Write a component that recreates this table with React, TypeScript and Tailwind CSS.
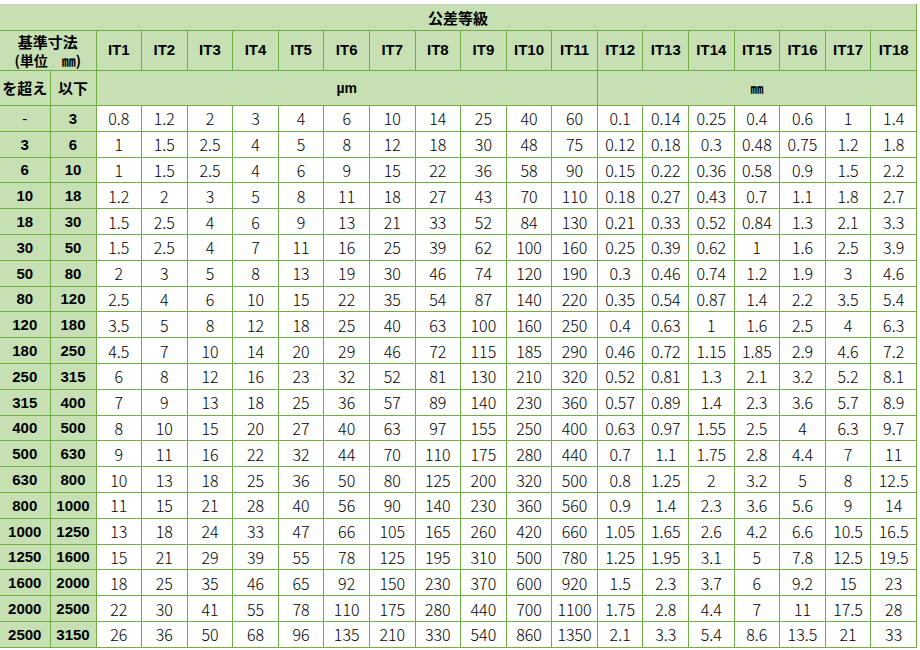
import React from "react";

const rows: [string, string, string[]][] = [
  ["-", "3", ["0.8", "1.2", "2", "3", "4", "6", "10", "14", "25", "40", "60", "0.1", "0.14", "0.25", "0.4", "0.6", "1", "1.4"]],
  ["3", "6", ["1", "1.5", "2.5", "4", "5", "8", "12", "18", "30", "48", "75", "0.12", "0.18", "0.3", "0.48", "0.75", "1.2", "1.8"]],
  ["6", "10", ["1", "1.5", "2.5", "4", "6", "9", "15", "22", "36", "58", "90", "0.15", "0.22", "0.36", "0.58", "0.9", "1.5", "2.2"]],
  ["10", "18", ["1.2", "2", "3", "5", "8", "11", "18", "27", "43", "70", "110", "0.18", "0.27", "0.43", "0.7", "1.1", "1.8", "2.7"]],
  ["18", "30", ["1.5", "2.5", "4", "6", "9", "13", "21", "33", "52", "84", "130", "0.21", "0.33", "0.52", "0.84", "1.3", "2.1", "3.3"]],
  ["30", "50", ["1.5", "2.5", "4", "7", "11", "16", "25", "39", "62", "100", "160", "0.25", "0.39", "0.62", "1", "1.6", "2.5", "3.9"]],
  ["50", "80", ["2", "3", "5", "8", "13", "19", "30", "46", "74", "120", "190", "0.3", "0.46", "0.74", "1.2", "1.9", "3", "4.6"]],
  ["80", "120", ["2.5", "4", "6", "10", "15", "22", "35", "54", "87", "140", "220", "0.35", "0.54", "0.87", "1.4", "2.2", "3.5", "5.4"]],
  ["120", "180", ["3.5", "5", "8", "12", "18", "25", "40", "63", "100", "160", "250", "0.4", "0.63", "1", "1.6", "2.5", "4", "6.3"]],
  ["180", "250", ["4.5", "7", "10", "14", "20", "29", "46", "72", "115", "185", "290", "0.46", "0.72", "1.15", "1.85", "2.9", "4.6", "7.2"]],
  ["250", "315", ["6", "8", "12", "16", "23", "32", "52", "81", "130", "210", "320", "0.52", "0.81", "1.3", "2.1", "3.2", "5.2", "8.1"]],
  ["315", "400", ["7", "9", "13", "18", "25", "36", "57", "89", "140", "230", "360", "0.57", "0.89", "1.4", "2.3", "3.6", "5.7", "8.9"]],
  ["400", "500", ["8", "10", "15", "20", "27", "40", "63", "97", "155", "250", "400", "0.63", "0.97", "1.55", "2.5", "4", "6.3", "9.7"]],
  ["500", "630", ["9", "11", "16", "22", "32", "44", "70", "110", "175", "280", "440", "0.7", "1.1", "1.75", "2.8", "4.4", "7", "11"]],
  ["630", "800", ["10", "13", "18", "25", "36", "50", "80", "125", "200", "320", "500", "0.8", "1.25", "2", "3.2", "5", "8", "12.5"]],
  ["800", "1000", ["11", "15", "21", "28", "40", "56", "90", "140", "230", "360", "560", "0.9", "1.4", "2.3", "3.6", "5.6", "9", "14"]],
  ["1000", "1250", ["13", "18", "24", "33", "47", "66", "105", "165", "260", "420", "660", "1.05", "1.65", "2.6", "4.2", "6.6", "10.5", "16.5"]],
  ["1250", "1600", ["15", "21", "29", "39", "55", "78", "125", "195", "310", "500", "780", "1.25", "1.95", "3.1", "5", "7.8", "12.5", "19.5"]],
  ["1600", "2000", ["18", "25", "35", "46", "65", "92", "150", "230", "370", "600", "920", "1.5", "2.3", "3.7", "6", "9.2", "15", "23"]],
  ["2000", "2500", ["22", "30", "41", "55", "78", "110", "175", "280", "440", "700", "1100", "1.75", "2.8", "4.4", "7", "11", "17.5", "28"]],
  ["2500", "3150", ["26", "36", "50", "68", "96", "135", "210", "330", "540", "860", "1350", "2.1", "3.3", "5.4", "8.6", "13.5", "21", "33"]],
];

const grades = Array.from({ length: 18 }, (_, i) => `IT${i + 1}`);

const jp = "font-['Noto_Sans_CJK_JP',sans-serif]";
const arial = "font-['Liberation_Sans','Noto_Sans_CJK_JP',sans-serif]";

export default function App() {
  return (
    <div className="w-[920px] h-[650px] bg-white pt-[4px] overflow-hidden">
      <table className="table-fixed border-collapse w-[917px] text-black">
        <colgroup>
          <col className="w-[50px]" />
          <col className="w-[46px]" />
          {grades.map((g) => (
            <col key={g} />
          ))}
        </colgroup>
        <thead>
          {/* grade title */}
          <tr className="h-[26px] bg-[#c6e0b4]">
            <th
              colSpan={20}
              className={`border border-[#70ad47] border-t-[#c8c8c8] border-l-0 text-[15px] leading-none font-bold ${jp}`}
            >
              公差等級
            </th>
          </tr>
          <tr className="h-[40px] bg-[#c6e0b4]">
            <th colSpan={2} className={`border border-[#70ad47] border-l-0 p-0 font-bold ${jp}`}>
              <div className="flex flex-col items-center">
                <span className="text-[15px] leading-[18px]">基準寸法</span>
                <span className="text-[14px] leading-[18px] whitespace-nowrap">(単位　㎜)</span>
              </div>
            </th>
            {grades.map((g) => (
              <th key={g} className={`border border-[#70ad47] p-0 text-[15px] font-bold ${arial}`}>
                {g}
              </th>
            ))}
          </tr>
          <tr className="h-[35px] bg-[#c6e0b4]">
            <th className={`border border-[#70ad47] border-l-0 p-0 text-[15px] font-bold whitespace-nowrap ${jp}`}>
              を超え
            </th>
            <th className={`border border-[#70ad47] p-0 text-[15px] font-bold ${jp}`}>以下</th>
            <th colSpan={11} className={`border border-[#70ad47] text-[14px] font-bold ${arial}`}>
              µm
            </th>
            <th colSpan={7} className={`border border-[#70ad47] text-[13px] font-bold ${jp}`}>
              ㎜
            </th>
          </tr>
        </thead>
        <tbody>
          {rows.map(([over, upto, vals]) => (
            <tr key={upto} className="h-[25.8px]">
              <td
                className={`border border-[#70ad47] border-l-0 bg-[#c6e0b4] p-0 text-center text-[15px] leading-none ${
                  over === "-" ? "font-normal" : "font-bold"
                } ${arial}`}
              >
                {over}
              </td>
              <td className={`border border-[#70ad47] bg-[#c6e0b4] p-0 text-center text-[15px] leading-none font-bold ${arial}`}>
                {upto}
              </td>
              {vals.map((v, i) => (
                <td
                  key={i}
                  className={`border border-[#70ad47] bg-white p-0 text-center text-[16px] font-light leading-none whitespace-nowrap ${jp}`}
                >
                  {v}
                </td>
              ))}
            </tr>
          ))}
        </tbody>
      </table>
    </div>
  );
}
